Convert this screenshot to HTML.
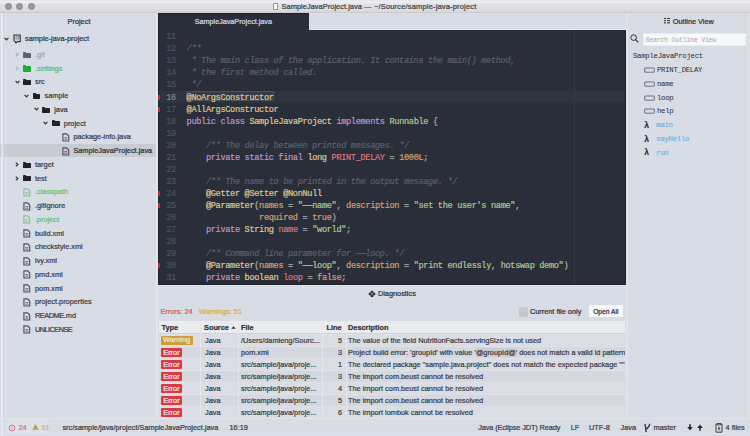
<!DOCTYPE html>
<html><head><meta charset="utf-8">
<style>
*{margin:0;padding:0;box-sizing:border-box}
html,body{width:750px;height:436px;overflow:hidden}
body{position:relative;background:#d8dce4;font-family:"Liberation Sans",sans-serif;color:#3c3f47}
.a{position:absolute;white-space:pre}
.ui{font-size:7.35px;line-height:12px;-webkit-text-stroke:0.22px currentColor}
.mono{font-family:"Liberation Mono",monospace}
.code{font-family:"Liberation Mono",monospace;font-size:8.6px;letter-spacing:-0.327px;line-height:12px;color:#abb2bf;-webkit-text-stroke:0.2px currentColor}
.c{color:#59606d;font-style:italic}
.k{color:#bd93d4}
.t{color:#dfc993}
.s{color:#abc894}
.v{color:#dc757d}
.n{color:#d4a06e}
</style></head><body>

<div class="a" style="left:0;top:0;width:750px;height:13px;background:linear-gradient(#e6e5ea 0px,#f0eff4 2px,#e3e2e7 4px,#dddce1 10px,#d6d5da 12px);border-bottom:1px solid #cccbd0"></div>
<div class="a" style="left:0;top:13px;width:750px;height:2.5px;background:#dcdbe1"></div>
<div class="a" style="left:4.700000000000001px;top:2.8px;width:7.2px;height:7.2px;border-radius:50%;background:#9a9a9e;border:0.6px solid #8a8a8e"></div>
<div class="a" style="left:16.2px;top:2.8px;width:7.2px;height:7.2px;border-radius:50%;background:#9a9a9e;border:0.6px solid #8a8a8e"></div>
<div class="a" style="left:27.799999999999997px;top:2.8px;width:7.2px;height:7.2px;border-radius:50%;background:#9a9a9e;border:0.6px solid #8a8a8e"></div>
<div class="a" style="left:273px;top:3px;width:5px;height:7px;border:1px solid #9a9a9e;background:#f4f4f4"></div>
<div class="a ui" style="left:281.5px;top:1px;font-size:7.5px;color:#3e3e42">SampleJavaProject.java <span style="letter-spacing:0.3px">—</span> <span style="letter-spacing:0.17px">~/Source/sample-java-project</span></div>
<div class="a" style="left:0;top:143.8px;width:156.3px;height:12.8px;background:#c8cbd2"></div>
<div class="a" style="left:0.8px;top:13px;width:2.4px;height:405px;background:rgba(245,248,255,0.5)"></div>
<div class="a" style="left:3.2px;top:13px;width:0.9px;height:405px;background:#d2d5db"></div>
<div class="a" style="left:4.6px;top:13px;width:1.6px;height:405px;background:rgba(255,255,255,0.13)"></div>
<div class="a" style="left:156.3px;top:13px;width:1.7px;height:405px;background:#e3e5ea"></div>
<div class="a ui" style="left:0;width:158px;top:15.5px;text-align:center;color:#2e3036">Project</div>
<svg class="a" style="left:3.8px;top:36.9px" width="5" height="4" viewBox="0 0 5 4"><path d="M0.6 0.8 L2.5 2.9 L4.4 0.8" fill="none" stroke="#33363d" stroke-width="1.25"/></svg>
<svg class="a" style="left:12.5px;top:34.3px" width="8" height="10" viewBox="0 0 8 10"><path d="M1 7.6 V1 H7.2 V7.6 H3.8" fill="none" stroke="#33363d" stroke-width="1.15"/><path d="M1.6 7.6 H3" stroke="#33363d" stroke-width="1"/><rect x="3" y="2.6" width="2.6" height="2.4" fill="none" stroke="#5a5d66" stroke-width="0.6"/><circle cx="3" cy="8.6" r="1" fill="#22242a"/></svg>
<div class="a ui" style="left:25px;top:33.3px;color:#33363d">sample-java-project</div>
<svg class="a" style="left:15.0px;top:52.0px" width="4" height="5" viewBox="0 0 4 5"><path d="M0.8 0.6 L2.9 2.5 L0.8 4.4" fill="none" stroke="#a3a7c2" stroke-width="1.25"/></svg>
<div class="a" style="left:22.9px;top:52.6px;width:7.9px;height:5.2px;background:#5f6275;border-radius:0.4px"></div><div class="a" style="left:22.9px;top:51.6px;width:3.4px;height:1.4px;background:#5f6275;border-radius:0.4px 0.4px 0 0"></div>
<div class="a ui" style="left:35.0px;top:49.0px;color:#a3a6ae">.git</div>
<svg class="a" style="left:15.0px;top:65.74px" width="4" height="5" viewBox="0 0 4 5"><path d="M0.8 0.6 L2.9 2.5 L0.8 4.4" fill="none" stroke="#8fd49c" stroke-width="1.25"/></svg>
<div class="a" style="left:22.9px;top:66.33999999999999px;width:7.9px;height:5.2px;background:#22a83a;border-radius:0.4px"></div><div class="a" style="left:22.9px;top:65.33999999999999px;width:3.4px;height:1.4px;background:#22a83a;border-radius:0.4px 0.4px 0 0"></div>
<div class="a ui" style="left:35.0px;top:62.739999999999995px;color:#58c16c">.settings</div>
<svg class="a" style="left:14.5px;top:79.98px" width="5" height="4" viewBox="0 0 5 4"><path d="M0.6 0.8 L2.5 2.9 L4.4 0.8" fill="none" stroke="#33363d" stroke-width="1.25"/></svg>
<div class="a" style="left:22.9px;top:80.08px;width:7.9px;height:5.2px;background:#1f2126;border-radius:0.4px"></div><div class="a" style="left:22.9px;top:79.08px;width:3.4px;height:1.4px;background:#1f2126;border-radius:0.4px 0.4px 0 0"></div>
<div class="a ui" style="left:35.0px;top:76.48px;color:#3a3d44">src</div>
<svg class="a" style="left:24.1px;top:93.72px" width="5" height="4" viewBox="0 0 5 4"><path d="M0.6 0.8 L2.5 2.9 L4.4 0.8" fill="none" stroke="#33363d" stroke-width="1.25"/></svg>
<div class="a" style="left:32.5px;top:93.82px;width:7.9px;height:5.2px;background:#1f2126;border-radius:0.4px"></div><div class="a" style="left:32.5px;top:92.82px;width:3.4px;height:1.4px;background:#1f2126;border-radius:0.4px 0.4px 0 0"></div>
<div class="a ui" style="left:44.6px;top:90.22px;color:#3a3d44">sample</div>
<svg class="a" style="left:33.7px;top:107.46000000000001px" width="5" height="4" viewBox="0 0 5 4"><path d="M0.6 0.8 L2.5 2.9 L4.4 0.8" fill="none" stroke="#33363d" stroke-width="1.25"/></svg>
<div class="a" style="left:42.1px;top:107.56px;width:7.9px;height:5.2px;background:#1f2126;border-radius:0.4px"></div><div class="a" style="left:42.1px;top:106.56px;width:3.4px;height:1.4px;background:#1f2126;border-radius:0.4px 0.4px 0 0"></div>
<div class="a ui" style="left:54.2px;top:103.96000000000001px;color:#3a3d44">java</div>
<svg class="a" style="left:43.3px;top:121.2px" width="5" height="4" viewBox="0 0 5 4"><path d="M0.6 0.8 L2.5 2.9 L4.4 0.8" fill="none" stroke="#33363d" stroke-width="1.25"/></svg>
<div class="a" style="left:51.699999999999996px;top:121.3px;width:7.9px;height:5.2px;background:#1f2126;border-radius:0.4px"></div><div class="a" style="left:51.699999999999996px;top:120.3px;width:3.4px;height:1.4px;background:#1f2126;border-radius:0.4px 0.4px 0 0"></div>
<div class="a ui" style="left:63.8px;top:117.7px;color:#3a3d44">project</div>
<svg class="a" style="left:61.6px;top:132.94px" width="8" height="9" viewBox="0 0 8 9"><path d="M0.9 0.9 H4.6 L6.7 3 V8 H0.9 Z" fill="none" stroke="#4e515a" stroke-width="1.15"/><path d="M2.4 4.6 H5.2 M2.4 6.2 H5.2" stroke="#4e515a" stroke-width="0.8"/></svg>
<div class="a ui" style="left:73.4px;top:131.44px;color:#3a3d44">package-info.java</div>
<svg class="a" style="left:61.6px;top:146.68px" width="8" height="9" viewBox="0 0 8 9"><path d="M0.9 0.9 H4.6 L6.7 3 V8 H0.9 Z" fill="none" stroke="#4e515a" stroke-width="1.15"/><path d="M2.4 4.6 H5.2 M2.4 6.2 H5.2" stroke="#4e515a" stroke-width="0.8"/></svg>
<div class="a ui" style="left:73.4px;top:145.18px;color:#2e3036">SampleJavaProject.java</div>
<svg class="a" style="left:15.0px;top:161.92000000000002px" width="4" height="5" viewBox="0 0 4 5"><path d="M0.8 0.6 L2.9 2.5 L0.8 4.4" fill="none" stroke="#33363d" stroke-width="1.25"/></svg>
<div class="a" style="left:22.9px;top:162.52px;width:7.9px;height:5.2px;background:#1f2126;border-radius:0.4px"></div><div class="a" style="left:22.9px;top:161.52px;width:3.4px;height:1.4px;background:#1f2126;border-radius:0.4px 0.4px 0 0"></div>
<div class="a ui" style="left:35.0px;top:158.92000000000002px;color:#3a3d44">target</div>
<svg class="a" style="left:15.0px;top:175.66px" width="4" height="5" viewBox="0 0 4 5"><path d="M0.8 0.6 L2.9 2.5 L0.8 4.4" fill="none" stroke="#33363d" stroke-width="1.25"/></svg>
<div class="a" style="left:22.9px;top:176.26px;width:7.9px;height:5.2px;background:#1f2126;border-radius:0.4px"></div><div class="a" style="left:22.9px;top:175.26px;width:3.4px;height:1.4px;background:#1f2126;border-radius:0.4px 0.4px 0 0"></div>
<div class="a ui" style="left:35.0px;top:172.66px;color:#3a3d44">test</div>
<svg class="a" style="left:23.2px;top:187.9px" width="8" height="9" viewBox="0 0 8 9"><path d="M0.9 0.9 H4.6 L6.7 3 V8 H0.9 Z" fill="none" stroke="#78c888" stroke-width="1.15"/><path d="M2.4 4.6 H5.2 M2.4 6.2 H5.2" stroke="#78c888" stroke-width="0.8"/></svg>
<div class="a ui" style="left:35.0px;top:186.4px;color:#68c078">.classpath</div>
<svg class="a" style="left:23.2px;top:201.64000000000001px" width="8" height="9" viewBox="0 0 8 9"><path d="M0.9 0.9 H4.6 L6.7 3 V8 H0.9 Z" fill="none" stroke="#4e515a" stroke-width="1.15"/><path d="M2.4 4.6 H5.2 M2.4 6.2 H5.2" stroke="#4e515a" stroke-width="0.8"/></svg>
<div class="a ui" style="left:35.0px;top:200.14000000000001px;color:#3a3d44">.gitignore</div>
<svg class="a" style="left:23.2px;top:215.38px" width="8" height="9" viewBox="0 0 8 9"><path d="M0.9 0.9 H4.6 L6.7 3 V8 H0.9 Z" fill="none" stroke="#78c888" stroke-width="1.15"/><path d="M2.4 4.6 H5.2 M2.4 6.2 H5.2" stroke="#78c888" stroke-width="0.8"/></svg>
<div class="a ui" style="left:35.0px;top:213.88px;color:#68c078">.project</div>
<svg class="a" style="left:23.2px;top:229.12px" width="8" height="9" viewBox="0 0 8 9"><path d="M0.9 0.9 H4.6 L6.7 3 V8 H0.9 Z" fill="none" stroke="#4e515a" stroke-width="1.15"/><path d="M2.4 4.6 H5.2 M2.4 6.2 H5.2" stroke="#4e515a" stroke-width="0.8"/></svg>
<div class="a ui" style="left:35.0px;top:227.62px;color:#3a3d44">build.xml</div>
<svg class="a" style="left:23.2px;top:242.86px" width="8" height="9" viewBox="0 0 8 9"><path d="M0.9 0.9 H4.6 L6.7 3 V8 H0.9 Z" fill="none" stroke="#4e515a" stroke-width="1.15"/><path d="M2.4 4.6 H5.2 M2.4 6.2 H5.2" stroke="#4e515a" stroke-width="0.8"/></svg>
<div class="a ui" style="left:35.0px;top:241.36px;color:#3a3d44">checkstyle.xml</div>
<svg class="a" style="left:23.2px;top:256.6px" width="8" height="9" viewBox="0 0 8 9"><path d="M0.9 0.9 H4.6 L6.7 3 V8 H0.9 Z" fill="none" stroke="#4e515a" stroke-width="1.15"/><path d="M2.4 4.6 H5.2 M2.4 6.2 H5.2" stroke="#4e515a" stroke-width="0.8"/></svg>
<div class="a ui" style="left:35.0px;top:255.10000000000002px;color:#3a3d44">ivy.xml</div>
<svg class="a" style="left:23.2px;top:270.34000000000003px" width="8" height="9" viewBox="0 0 8 9"><path d="M0.9 0.9 H4.6 L6.7 3 V8 H0.9 Z" fill="none" stroke="#4e515a" stroke-width="1.15"/><path d="M2.4 4.6 H5.2 M2.4 6.2 H5.2" stroke="#4e515a" stroke-width="0.8"/></svg>
<div class="a ui" style="left:35.0px;top:268.84000000000003px;color:#3a3d44">pmd.xml</div>
<svg class="a" style="left:23.2px;top:284.08000000000004px" width="8" height="9" viewBox="0 0 8 9"><path d="M0.9 0.9 H4.6 L6.7 3 V8 H0.9 Z" fill="none" stroke="#4e515a" stroke-width="1.15"/><path d="M2.4 4.6 H5.2 M2.4 6.2 H5.2" stroke="#4e515a" stroke-width="0.8"/></svg>
<div class="a ui" style="left:35.0px;top:282.58000000000004px;color:#3a3d44">pom.xml</div>
<svg class="a" style="left:23.2px;top:297.82px" width="8" height="9" viewBox="0 0 8 9"><path d="M0.9 0.9 H4.6 L6.7 3 V8 H0.9 Z" fill="none" stroke="#4e515a" stroke-width="1.15"/><path d="M2.4 4.6 H5.2 M2.4 6.2 H5.2" stroke="#4e515a" stroke-width="0.8"/></svg>
<div class="a ui" style="left:35.0px;top:296.32px;color:#3a3d44">project.properties</div>
<svg class="a" style="left:23.2px;top:311.56px" width="8" height="9" viewBox="0 0 8 9"><path d="M0.9 0.9 H4.6 L6.7 3 V8 H0.9 Z" fill="none" stroke="#4e515a" stroke-width="1.15"/><path d="M2.4 4.6 H5.2 M2.4 6.2 H5.2" stroke="#4e515a" stroke-width="0.8"/></svg>
<div class="a ui" style="left:35.0px;top:310.06px;color:#3a3d44"><span style="letter-spacing:-0.45px">README</span>.md</div>
<svg class="a" style="left:23.2px;top:325.3px" width="8" height="9" viewBox="0 0 8 9"><path d="M0.9 0.9 H4.6 L6.7 3 V8 H0.9 Z" fill="none" stroke="#4e515a" stroke-width="1.15"/><path d="M2.4 4.6 H5.2 M2.4 6.2 H5.2" stroke="#4e515a" stroke-width="0.8"/></svg>
<div class="a ui" style="left:35.0px;top:323.8px;color:#3a3d44"><span style="letter-spacing:-0.55px">UNLICENSE</span></div>
<div class="a" style="left:158px;top:13px;width:468px;height:17px;background:#d8dce4;border-bottom:1.2px solid #e4e6eb"></div>
<div class="a" style="left:158px;top:13px;width:151px;height:17px;background:#2a2e38;border-top:1px solid #1f222a"></div>
<div class="a ui" style="left:194.8px;top:15.5px;font-size:7.2px;color:#d7dae0">SampleJavaProject.java</div>
<div class="a" style="left:158px;top:30px;width:468px;height:254.7px;background:#2a2e38;border-right:1px solid #1f2229;border-bottom:1px solid #1f2229"></div>
<div class="a" style="left:159px;top:281px;width:466px;height:3px;background:#272b35"></div>
<div class="a" style="left:158px;top:13px;width:1px;height:271px;background:#1f2229"></div>
<div class="a" style="left:159px;top:90.5px;width:466px;height:12px;background:#2f333d"></div>
<div class="a" style="left:573.8px;top:30px;width:1px;height:254px;background:#353a45"></div>
<div class="a" style="left:186.3px;top:90.6px;width:88px;height:10.6px;border:0.6px solid #4a505c;background:#363b46;border-radius:1px"></div>
<div class="a code" style="left:155px;width:20.8px;text-align:right;top:31.4px;color:#4b5263">11</div>
<div class="a code" style="left:155px;width:20.8px;text-align:right;top:43.42px;color:#4b5263">12</div>
<div class="a code" style="left:186.6px;top:43.42px"><span class="c">/**</span></div>
<div class="a code" style="left:155px;width:20.8px;text-align:right;top:55.44px;color:#4b5263">13</div>
<div class="a code" style="left:186.6px;top:55.44px"><span class="c"> * The main class of the application. It contains the main() method,</span></div>
<div class="a code" style="left:155px;width:20.8px;text-align:right;top:67.46000000000001px;color:#4b5263">14</div>
<div class="a code" style="left:186.6px;top:67.46000000000001px"><span class="c"> * the first method called.</span></div>
<div class="a code" style="left:155px;width:20.8px;text-align:right;top:79.47999999999999px;color:#4b5263">15</div>
<div class="a code" style="left:186.6px;top:79.47999999999999px"><span class="c"> */</span></div>
<div class="a code" style="left:155px;width:20.8px;text-align:right;top:91.5px;color:#7f8795">16</div>
<div class="a code" style="left:186.6px;top:91.5px"><span class="t">@NoArgsConstructor</span></div>
<div class="a code" style="left:155px;width:20.8px;text-align:right;top:103.52000000000001px;color:#4b5263">17</div>
<div class="a code" style="left:186.6px;top:103.52000000000001px"><span class="t">@AllArgsConstructor</span></div>
<div class="a code" style="left:155px;width:20.8px;text-align:right;top:115.53999999999999px;color:#4b5263">18</div>
<div class="a code" style="left:186.6px;top:115.53999999999999px"><span class="k">public class</span> <span class="t">SampleJavaProject</span> <span class="k">implements</span> <span class="s">Runnable</span> {</div>
<div class="a code" style="left:155px;width:20.8px;text-align:right;top:127.56px;color:#4b5263">19</div>
<div class="a code" style="left:155px;width:20.8px;text-align:right;top:139.57999999999998px;color:#4b5263">20</div>
<div class="a code" style="left:186.6px;top:139.57999999999998px">    <span class="c">/** The delay between printed messages. */</span></div>
<div class="a code" style="left:155px;width:20.8px;text-align:right;top:151.6px;color:#4b5263">21</div>
<div class="a code" style="left:186.6px;top:151.6px">    <span class="k">private static final</span> <span class="t">long</span> <span class="v">PRINT_DELAY</span> = <span class="n">1000L</span>;</div>
<div class="a code" style="left:155px;width:20.8px;text-align:right;top:163.62px;color:#4b5263">22</div>
<div class="a code" style="left:155px;width:20.8px;text-align:right;top:175.64000000000001px;color:#4b5263">23</div>
<div class="a code" style="left:186.6px;top:175.64000000000001px">    <span class="c">/** The name to be printed in the output message. */</span></div>
<div class="a code" style="left:155px;width:20.8px;text-align:right;top:187.66px;color:#4b5263">24</div>
<div class="a code" style="left:186.6px;top:187.66px">    <span class="t">@Getter @Setter @NonNull</span></div>
<div class="a code" style="left:155px;width:20.8px;text-align:right;top:199.68px;color:#4b5263">25</div>
<div class="a code" style="left:186.6px;top:199.68px">    <span class="t">@Parameter</span>(<span class="n">names</span> = <span class="s">"──name"</span>, <span class="n">description</span> = <span class="s">"set the user's name"</span>,</div>
<div class="a code" style="left:155px;width:20.8px;text-align:right;top:211.7px;color:#4b5263">26</div>
<div class="a code" style="left:186.6px;top:211.7px">               <span class="n">required</span> = <span class="n">true</span>)</div>
<div class="a code" style="left:155px;width:20.8px;text-align:right;top:223.72px;color:#4b5263">27</div>
<div class="a code" style="left:186.6px;top:223.72px">    <span class="k">private</span> <span class="t">String</span> <span class="v">name</span> = <span class="s">"world"</span>;</div>
<div class="a code" style="left:155px;width:20.8px;text-align:right;top:235.74px;color:#4b5263">28</div>
<div class="a code" style="left:155px;width:20.8px;text-align:right;top:247.76px;color:#4b5263">29</div>
<div class="a code" style="left:186.6px;top:247.76px">    <span class="c">/** Command line parameter for ──loop. */</span></div>
<div class="a code" style="left:155px;width:20.8px;text-align:right;top:259.78px;color:#4b5263">30</div>
<div class="a code" style="left:186.6px;top:259.78px">    <span class="t">@Parameter</span>(<span class="n">names</span> = <span class="s">"──loop"</span>, <span class="n">description</span> = <span class="s">"print endlessly, hotswap demo"</span>)</div>
<div class="a code" style="left:155px;width:20.8px;text-align:right;top:271.79999999999995px;color:#4b5263">31</div>
<div class="a code" style="left:186.6px;top:271.79999999999995px">    <span class="k">private</span> <span class="t">boolean</span> <span class="v">loop</span> = <span class="n">false</span>;</div>
<div class="a" style="left:157.6px;top:95.19999999999999px;width:2.2px;height:4.6px;background:#c42e3e;border-radius:0 1px 1px 0"></div>
<div class="a" style="left:157.6px;top:107.22px;width:2.2px;height:4.6px;background:#c42e3e;border-radius:0 1px 1px 0"></div>
<div class="a" style="left:157.6px;top:191.35999999999999px;width:2.2px;height:4.6px;background:#c42e3e;border-radius:0 1px 1px 0"></div>
<div class="a" style="left:157.6px;top:203.38px;width:2.2px;height:4.6px;background:#c42e3e;border-radius:0 1px 1px 0"></div>
<div class="a" style="left:157.6px;top:263.48px;width:2.2px;height:4.6px;background:#c42e3e;border-radius:0 1px 1px 0"></div>
<div class="a" style="left:744.6px;top:13px;width:1px;height:405px;background:#d1d4db"></div>
<div class="a" style="left:745.6px;top:13px;width:4.4px;height:405px;background:#dcdfe6"></div>
<div class="a" style="left:626.2px;top:13px;width:2.2px;height:405px;background:#e0e3e8"></div>
<div class="a" style="left:664px;top:18px;width:1.5px;height:1.3px;background:#2e3036;box-shadow:0 2.2px #2e3036,0 4.4px #2e3036"></div>
<div class="a" style="left:666.5px;top:18px;width:3.5px;height:1.3px;background:#2e3036;box-shadow:0 2.2px #2e3036,0 4.4px #2e3036"></div>
<div class="a ui" style="left:672.8px;top:16.3px;color:#2e3036">Outline View</div>
<svg class="a" style="left:629.5px;top:34px" width="9" height="9" viewBox="0 0 9 9"><circle cx="3.6" cy="3.6" r="2.8" fill="none" stroke="#2e3036" stroke-width="1"/><path d="M5.6 5.6 L8.4 8.4" stroke="#2e3036" stroke-width="1.2"/></svg>
<div class="a" style="left:642.5px;top:33.2px;width:103.8px;height:12.8px;background:#f7f8fa;border:0.6px solid #e9ebef"></div>
<div class="a mono" style="left:645.5px;top:34.6px;font-size:6.7px;letter-spacing:-0.3px;line-height:10.4px;color:#a6a9b0">Search Outline View</div>
<div class="a mono" style="left:633px;top:49.9px;font-size:7.3px;letter-spacing:-0.27px;line-height:12px;color:#2c2e34">SampleJavaProject</div>
<svg class="a" style="left:644px;top:66.9px" width="11" height="6" viewBox="0 0 11 6"><rect x="0.7" y="1" width="9.6" height="4.2" rx="0.4" fill="none" stroke="#4a4d56" stroke-width="0.75"/></svg>
<div class="a mono" style="left:657px;top:63.900000000000006px;font-size:7.3px;letter-spacing:-0.27px;line-height:12px;color:#2c2e34">PRINT_DELAY</div>
<svg class="a" style="left:644px;top:80.72px" width="11" height="6" viewBox="0 0 11 6"><rect x="0.7" y="1" width="9.6" height="4.2" rx="0.4" fill="none" stroke="#4a4d56" stroke-width="0.75"/></svg>
<div class="a mono" style="left:657px;top:77.72px;font-size:7.3px;letter-spacing:-0.27px;line-height:12px;color:#2c2e34">name</div>
<svg class="a" style="left:644px;top:94.54px" width="11" height="6" viewBox="0 0 11 6"><rect x="0.7" y="1" width="9.6" height="4.2" rx="0.4" fill="none" stroke="#4a4d56" stroke-width="0.75"/></svg>
<div class="a mono" style="left:657px;top:91.54px;font-size:7.3px;letter-spacing:-0.27px;line-height:12px;color:#2c2e34">loop</div>
<svg class="a" style="left:644px;top:108.36000000000001px" width="11" height="6" viewBox="0 0 11 6"><rect x="0.7" y="1" width="9.6" height="4.2" rx="0.4" fill="none" stroke="#4a4d56" stroke-width="0.75"/></svg>
<div class="a mono" style="left:657px;top:105.36000000000001px;font-size:7.3px;letter-spacing:-0.27px;line-height:12px;color:#2c2e34">help</div>
<div class="a" style="left:644.2px;top:118.68px;font-size:8.5px;line-height:12px;font-weight:bold;color:#15161a">λ</div>
<div class="a mono" style="left:656.3px;top:119.18px;font-size:7.3px;letter-spacing:-0.27px;line-height:12px;color:#72b0e6;-webkit-text-stroke:0.15px currentColor">main</div>
<div class="a" style="left:644.2px;top:132.5px;font-size:8.5px;line-height:12px;font-weight:bold;color:#15161a">λ</div>
<div class="a mono" style="left:656.3px;top:133.0px;font-size:7.3px;letter-spacing:-0.27px;line-height:12px;color:#72b0e6;-webkit-text-stroke:0.15px currentColor">sayHello</div>
<div class="a" style="left:644.2px;top:146.32px;font-size:8.5px;line-height:12px;font-weight:bold;color:#15161a">λ</div>
<div class="a mono" style="left:656.3px;top:146.82px;font-size:7.3px;letter-spacing:-0.27px;line-height:12px;color:#72b0e6;-webkit-text-stroke:0.15px currentColor">run</div>
<div class="a" style="left:158px;top:284.7px;width:468px;height:134px;background:#d8dce4;border-top:1.5px solid #e2e5ea"></div>
<svg class="a" style="left:368px;top:290px" width="8" height="8" viewBox="0 0 8 8"><circle cx="4" cy="2.1" r="1.45" fill="#2e3036"/><circle cx="4" cy="5.9" r="1.45" fill="#2e3036"/><circle cx="2.1" cy="4" r="1.45" fill="#2e3036"/><circle cx="5.9" cy="4" r="1.45" fill="#2e3036"/><circle cx="4" cy="4" r="0.9" fill="#8a8d95"/></svg>
<div class="a ui" style="left:377.9px;top:287.8px;color:#2e3036">Diagnostics</div>
<div class="a ui" style="left:160.4px;top:305.8px;color:#e0545a">Errors: 24</div>
<div class="a" style="left:197px;top:306.5px;width:45px;height:11px;background:#dedcd6"></div>
<div class="a ui" style="left:199px;top:305.8px;color:#cfae6a">Warnings: 51</div>
<div class="a" style="left:518.7px;top:307px;width:9.3px;height:9.5px;background:#c5c8cf;border-radius:1.5px"></div>
<div class="a ui" style="left:529.9px;top:305.8px;color:#2e3036">Current file only</div>
<div class="a" style="left:588.6px;top:305.3px;width:34.4px;height:12.1px;background:#f6f7f9;border-radius:1.5px"></div>
<div class="a ui" style="left:588.6px;width:34.4px;text-align:center;top:305.5px;font-size:6.7px;color:#2e3036">Open All</div>
<div class="a" style="left:159px;top:320.6px;width:466px;height:13.4px;background:#e9ebef;border-bottom:1px solid #cfd2d8"></div>
<div class="a ui" style="left:161.5px;top:321.5px;font-weight:bold;color:#2e3036">Type</div>
<div class="a ui" style="left:204px;top:321.5px;font-weight:bold;color:#2e3036">Source</div>
<div class="a ui" style="left:241px;top:321.5px;font-weight:bold;color:#2e3036">File</div>
<div class="a ui" style="left:326.5px;top:321.5px;font-weight:bold;color:#2e3036">Line</div>
<div class="a ui" style="left:348px;top:321.5px;font-weight:bold;color:#2e3036">Description</div>
<svg class="a" style="left:231px;top:326px" width="5" height="3" viewBox="0 0 5 3"><path d="M0.3 2.8 L2.5 0.3 L4.7 2.8 Z" fill="#2e3036"/></svg>
<div class="a" style="left:159px;top:334px;width:466px;height:12px;background:#dadde4;border-top:1px solid #dee1e7"></div>
<div class="a ui" style="left:160.6px;top:336.2px;width:32px;height:8.8px;line-height:8.8px;background:#cd9d36;color:#f6ecd0;border-radius:1px;text-align:center">Warning</div>
<div class="a ui" style="left:205px;top:335.2px;color:#3a3d44">Java</div>
<div class="a ui" style="left:241px;top:335.2px;color:#3a3d44">/Users/damieng/Sourc...</div>
<div class="a ui" style="left:322px;width:20px;text-align:right;top:335.2px;color:#3a3d44">5</div>
<div class="a" style="left:345.7px;top:334px;width:279.5px;height:12px;overflow:hidden"><div class="a ui" style="left:2.3px;top:1.2px;color:#3a3d44">The value of the field NutritionFacts.servingSize is not used</div></div>
<div class="a" style="left:159px;top:346px;width:466px;height:12px;background:#d5d8df;border-top:1px solid #dee1e7"></div>
<div class="a ui" style="left:160.6px;top:348.2px;width:21.7px;height:9px;line-height:9px;background:#d63a45;color:#fbe6e8;border-radius:1px;text-align:center">Error</div>
<div class="a ui" style="left:205px;top:347.2px;color:#3a3d44">Java</div>
<div class="a ui" style="left:241px;top:347.2px;color:#3a3d44">pom.xml</div>
<div class="a ui" style="left:322px;width:20px;text-align:right;top:347.2px;color:#3a3d44">3</div>
<div class="a" style="left:345.7px;top:346px;width:279.5px;height:12px;overflow:hidden"><div class="a ui" style="left:2.3px;top:1.2px;color:#3a3d44">Project build error: 'groupId' with value &#39;<span style="background:#c9ccd3">@groupId@&#39;</span> does not match a valid id pattern.</div></div>
<div class="a" style="left:159px;top:358px;width:466px;height:12px;background:#dadde4;border-top:1px solid #dee1e7"></div>
<div class="a ui" style="left:160.6px;top:360.2px;width:21.7px;height:9px;line-height:9px;background:#d63a45;color:#fbe6e8;border-radius:1px;text-align:center">Error</div>
<div class="a ui" style="left:205px;top:359.2px;color:#3a3d44">Java</div>
<div class="a ui" style="left:241px;top:359.2px;color:#3a3d44">src/sample/java/proje...</div>
<div class="a ui" style="left:322px;width:20px;text-align:right;top:359.2px;color:#3a3d44">1</div>
<div class="a" style="left:345.7px;top:358px;width:279.5px;height:12px;overflow:hidden"><div class="a ui" style="left:2.3px;top:1.2px;color:#3a3d44">The declared package "sample.java.project" does not match the expected package ""</div></div>
<div class="a" style="left:159px;top:370px;width:466px;height:12px;background:#d5d8df;border-top:1px solid #dee1e7"></div>
<div class="a ui" style="left:160.6px;top:372.2px;width:21.7px;height:9px;line-height:9px;background:#d63a45;color:#fbe6e8;border-radius:1px;text-align:center">Error</div>
<div class="a ui" style="left:205px;top:371.2px;color:#3a3d44">Java</div>
<div class="a ui" style="left:241px;top:371.2px;color:#3a3d44">src/sample/java/proje...</div>
<div class="a ui" style="left:322px;width:20px;text-align:right;top:371.2px;color:#3a3d44">3</div>
<div class="a" style="left:345.7px;top:370px;width:279.5px;height:12px;overflow:hidden"><div class="a ui" style="left:2.3px;top:1.2px;color:#3a3d44">The import com.beust cannot be resolved</div></div>
<div class="a" style="left:159px;top:382px;width:466px;height:12px;background:#dadde4;border-top:1px solid #dee1e7"></div>
<div class="a ui" style="left:160.6px;top:384.2px;width:21.7px;height:9px;line-height:9px;background:#d63a45;color:#fbe6e8;border-radius:1px;text-align:center">Error</div>
<div class="a ui" style="left:205px;top:383.2px;color:#3a3d44">Java</div>
<div class="a ui" style="left:241px;top:383.2px;color:#3a3d44">src/sample/java/proje...</div>
<div class="a ui" style="left:322px;width:20px;text-align:right;top:383.2px;color:#3a3d44">4</div>
<div class="a" style="left:345.7px;top:382px;width:279.5px;height:12px;overflow:hidden"><div class="a ui" style="left:2.3px;top:1.2px;color:#3a3d44">The import com.beust cannot be resolved</div></div>
<div class="a" style="left:159px;top:394px;width:466px;height:12px;background:#d5d8df;border-top:1px solid #dee1e7"></div>
<div class="a ui" style="left:160.6px;top:396.2px;width:21.7px;height:9px;line-height:9px;background:#d63a45;color:#fbe6e8;border-radius:1px;text-align:center">Error</div>
<div class="a ui" style="left:205px;top:395.2px;color:#3a3d44">Java</div>
<div class="a ui" style="left:241px;top:395.2px;color:#3a3d44">src/sample/java/proje...</div>
<div class="a ui" style="left:322px;width:20px;text-align:right;top:395.2px;color:#3a3d44">5</div>
<div class="a" style="left:345.7px;top:394px;width:279.5px;height:12px;overflow:hidden"><div class="a ui" style="left:2.3px;top:1.2px;color:#3a3d44">The import com.beust cannot be resolved</div></div>
<div class="a" style="left:159px;top:406px;width:466px;height:12px;background:#dadde4;border-top:1px solid #dee1e7"></div>
<div class="a ui" style="left:160.6px;top:408.2px;width:21.7px;height:9px;line-height:9px;background:#d63a45;color:#fbe6e8;border-radius:1px;text-align:center">Error</div>
<div class="a ui" style="left:205px;top:407.2px;color:#3a3d44">Java</div>
<div class="a ui" style="left:241px;top:407.2px;color:#3a3d44">src/sample/java/proje...</div>
<div class="a ui" style="left:322px;width:20px;text-align:right;top:407.2px;color:#3a3d44">6</div>
<div class="a" style="left:345.7px;top:406px;width:279.5px;height:12px;overflow:hidden"><div class="a ui" style="left:2.3px;top:1.2px;color:#3a3d44">The import lombok cannot be resolved</div></div>
<div class="a" style="left:200.3px;top:321px;width:1px;height:95px;background:#e4e6ea"></div>
<div class="a" style="left:237.7px;top:321px;width:1px;height:95px;background:#e4e6ea"></div>
<div class="a" style="left:321.7px;top:321px;width:1px;height:95px;background:#e4e6ea"></div>
<div class="a" style="left:345.7px;top:321px;width:1px;height:95px;background:#e4e6ea"></div>
<div class="a" style="left:0;top:418px;width:750px;height:18px;background:#d8dce4;border-top:1px solid #e1e4ea"></div>
<div class="a" style="left:7px;top:419px;width:42px;height:14px;background:#dde1e9"></div>
<div class="a" style="left:0.8px;top:418px;width:2.4px;height:18px;background:#e3e7ef"></div>
<div class="a" style="left:0;top:433.2px;width:750px;height:1px;background:#e0e3e8"></div>
<svg class="a" style="left:8px;top:423.5px" width="8" height="8" viewBox="0 0 8 8"><circle cx="4" cy="4" r="3" fill="none" stroke="#d77a8a" stroke-width="1"/><path d="M4 2.3 V4.3 M4 5.1 V5.8" stroke="#d77a8a" stroke-width="0.9"/></svg>
<div class="a ui" style="left:18.4px;top:421.5px;color:#d4707f">24</div>
<svg class="a" style="left:32.2px;top:423.8px" width="7" height="6" viewBox="0 0 7 6"><path d="M3.5 0.2 L6.8 5.8 H0.2 Z" fill="#c09a55"/></svg>
<div class="a ui" style="left:41.5px;top:421.5px;color:#cdb68d">51</div>
<div class="a ui" style="left:62.4px;top:421.7px;color:#3a3d44">src/sample/java/project/SampleJavaProject.java</div>
<div class="a ui" style="left:229.5px;top:421.7px;color:#3a3d44">16:19</div>
<div class="a ui" style="left:478.2px;top:421.7px;color:#3a3d44;letter-spacing:-0.12px">Java (Eclipse JDT) Ready</div>
<div class="a ui" style="left:570.7px;top:421.7px;color:#3a3d44">LF</div>
<div class="a ui" style="left:589px;top:421.7px;color:#3a3d44">UTF-8</div>
<div class="a ui" style="left:620.5px;top:421.7px;color:#3a3d44">Java</div>
<svg class="a" style="left:644px;top:423px" width="7" height="10" viewBox="0 0 7 10"><path d="M1 0.8 L2.2 9.2" fill="none" stroke="#2e3036" stroke-width="1.3"/><path d="M5.8 0.8 C5.6 3.5 4 5 2 6.2" fill="none" stroke="#2e3036" stroke-width="1.3"/></svg>
<div class="a ui" style="left:653.6px;top:421.7px;color:#3a3d44">master</div>
<svg class="a" style="left:686.6px;top:424.2px" width="6" height="7" viewBox="0 0 6 7"><path d="M3 0.2 V3.5" stroke="#26282d" stroke-width="1.6"/><path d="M0.2 3 L3 6.6 L5.8 3 Z" fill="#26282d"/></svg>
<svg class="a" style="left:696.8px;top:424.2px" width="6" height="7" viewBox="0 0 6 7"><path d="M3 6.8 V3.5" stroke="#26282d" stroke-width="1.6"/><path d="M0.2 4 L3 0.4 L5.8 4 Z" fill="#26282d"/></svg>
<svg class="a" style="left:714.8px;top:422.8px" width="8" height="10" viewBox="0 0 8 10"><path d="M2.6 1 H1 V9.2 H7 V1 H5.4" fill="none" stroke="#2e3036" stroke-width="0.9"/><rect x="2.6" y="0.5" width="2.8" height="1.4" fill="none" stroke="#2e3036" stroke-width="0.8"/><path d="M4 3.5 V7.5 M2.8 5.5 H5.2" stroke="#2e3036" stroke-width="0.8"/></svg>
<div class="a ui" style="left:725.6px;top:421.7px;color:#3a3d44">4 files</div>
</body></html>
